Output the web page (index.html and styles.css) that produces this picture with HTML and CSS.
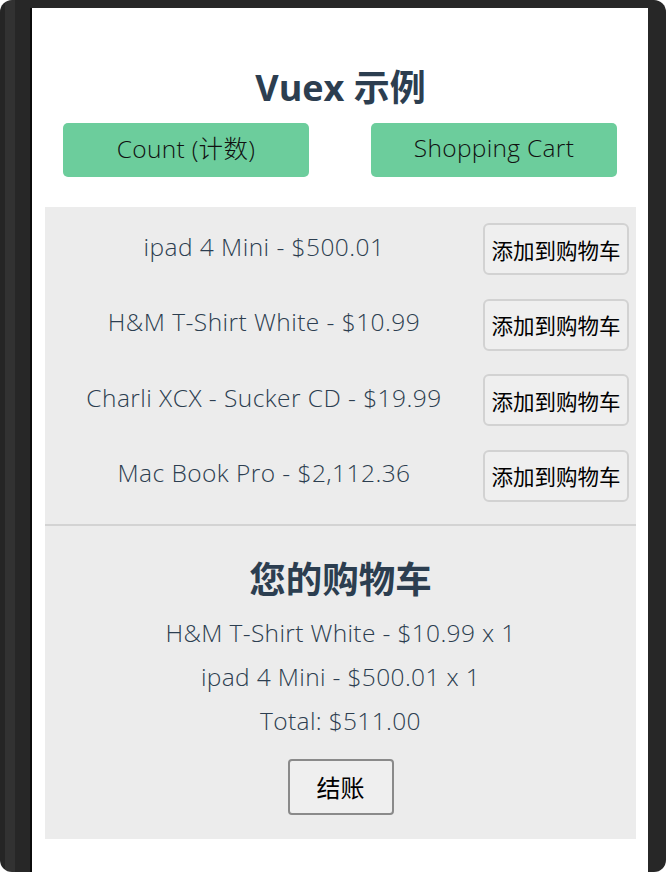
FILE: index.html
```html
<!DOCTYPE html>
<html lang="zh">
<head>
<meta charset="utf-8">
<title>Vuex 示例</title>
<link rel="stylesheet" href="styles.css">
</head>
<body>
<div class="device">
  <div class="screen">
    <h1 class="title">Vuex 示例</h1>
    <nav class="nav">
      <button class="nav-btn">Count (计数)</button>
      <button class="nav-btn">Shopping Cart</button>
    </nav>
    <div class="panel">
      <ul class="products">
        <li class="product"><span class="product-name">ipad 4 Mini - $500.01</span><button class="add-btn">添加到购物车</button></li>
        <li class="product"><span class="product-name">H&amp;M T-Shirt White - $10.99</span><button class="add-btn">添加到购物车</button></li>
        <li class="product"><span class="product-name">Charli XCX - Sucker CD - $19.99</span><button class="add-btn">添加到购物车</button></li>
        <li class="product"><span class="product-name">Mac Book Pro - $2,112.36</span><button class="add-btn">添加到购物车</button></li>
      </ul>
      <div class="cart">
        <h2 class="cart-title">您的购物车</h2>
        <ul class="cart-items">
          <li class="cart-item">H&amp;M T-Shirt White - $10.99 x 1</li>
          <li class="cart-item">ipad 4 Mini - $500.01 x 1</li>
        </ul>
        <p class="total">Total: $511.00</p>
        <button class="checkout-btn">结账</button>
      </div>
    </div>
  </div>
</div>
</body>
</html>
```
FILE: styles.css
```css
html, body {
  margin: 0;
  padding: 0;
  background: #ffffff;
}
.device {
  width: 666px;
  height: 872px;
  box-sizing: border-box;
  padding: 8px 18px 0 30px;
  border-radius: 12px;
  background:
    linear-gradient(to right, #252525 0, #252525 5px, #323232 5px, #323232 15px, #272727 15px, #272727 30px, transparent 30px),
    #272727;
  overflow: hidden;
}
.screen {
  height: 864px;
  background: #ffffff;
  border-left: 2px solid #0b0b0b;
  box-sizing: border-box;
  padding: 0 12px 0 13px;
  font-family: "Open Sans", "Noto Sans CJK SC", sans-serif;
  font-weight: 300;
  color: #2c3e50;
  text-align: center;
}
.title {
  margin: 0;
  padding-top: 56px;
  font-size: 36px;
  line-height: 48px;
  font-weight: 700;
}
.nav {
  display: flex;
  justify-content: space-around;
  margin: 0 -12px 0 -13px;
  padding-top: 11px;
}
.nav-btn {
  width: 246px;
  height: 54px;
  border: none;
  border-radius: 5px;
  background: #6ccd9c;
  color: #111111;
  font-family: "Open Sans", "Noto Sans CJK SC", sans-serif;
  font-weight: 300;
  font-size: 24.5px;
  letter-spacing: 0.3px;
  padding: 0 0 5px;
}
.panel {
  margin-top: 30px;
  background: #ececec;
  height: 632px;
}
.products {
  list-style: none;
  margin: 0;
  padding: 16px 7px 22px 0;
  display: flex;
  flex-direction: column;
  gap: 23.5px;
  border-bottom: 2px solid #d3d3d3;
}
.product {
  display: flex;
  align-items: center;
  height: 52px;
}
.product-name {
  flex: 1;
  font-size: 24.5px;
  letter-spacing: 0.45px;
  padding-bottom: 6px;
}
.add-btn {
  width: 146px;
  height: 52px;
  padding: 0;
  border: 2px solid #d2d2d2;
  border-radius: 6px;
  background: #efefef;
  color: #000000;
  font-family: "Noto Sans CJK SC", sans-serif;
  font-size: 21.5px;
}
.cart {
  padding-top: 28px;
}
.cart-title {
  margin: 0;
  font-size: 36.5px;
  line-height: 50px;
  font-weight: 700;
}
.cart-items {
  list-style: none;
  margin: 7px 0 0;
  padding: 0;
}
.cart-item, .total {
  font-size: 24.5px;
  letter-spacing: 0.35px;
  line-height: 44px;
  margin: 0;
}
.checkout-btn {
  margin-top: 16px;
  width: 106px;
  height: 56px;
  padding: 0;
  border: 2px solid #8a8a8a;
  border-radius: 4px;
  background: #efefef;
  color: #000000;
  font-family: "Noto Sans CJK SC", sans-serif;
  font-size: 24px;
}
```
